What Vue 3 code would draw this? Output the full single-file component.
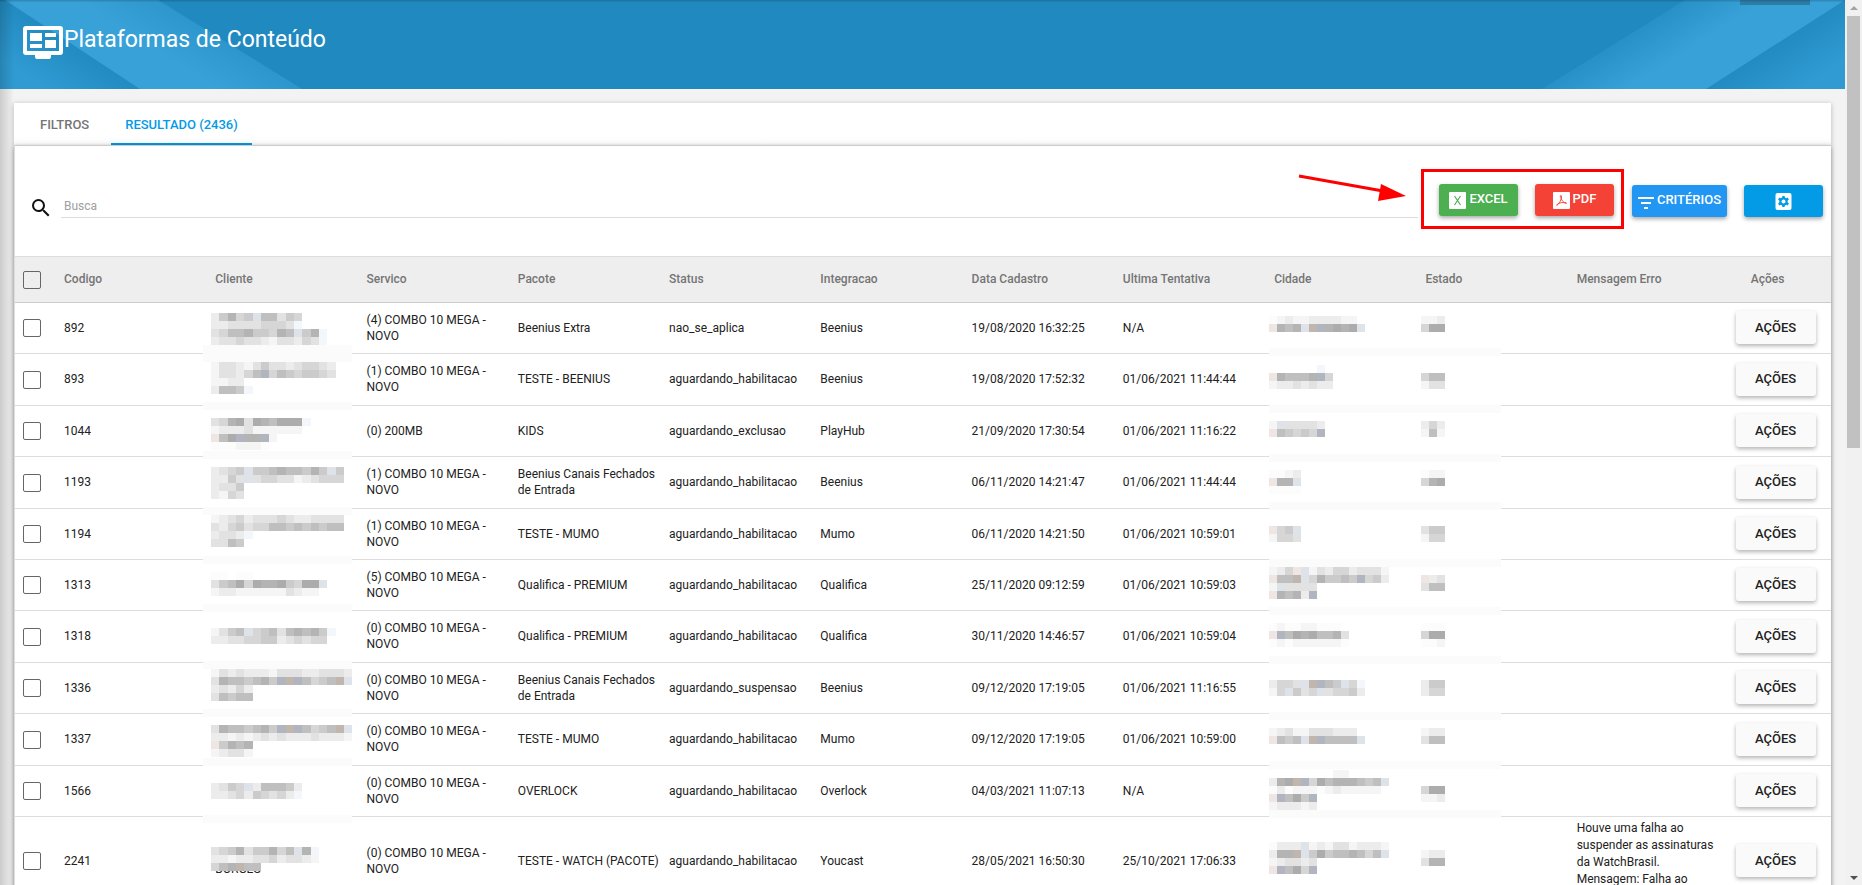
<script setup>
import { ref } from 'vue'

const search = ref('')

const columns = [
  'Codigo', 'Cliente', 'Servico', 'Pacote', 'Status', 'Integracao',
  'Data Cadastro', 'Ultima Tentativa', 'Cidade', 'Estado', 'Mensagem Erro',
]

const rows = [
  {
    code: '892', service: '(4) COMBO 10 MEGA - NOVO', pack: 'Beenius Extra', status: 'nao_se_aplica',
    integration: 'Beenius', created: '19/08/2020 16:32:25', last: 'N/A',
    client: { y: 10, band: 42, tall: 17, cells: ['25745b66354', '2233334443w', '3466755476b57w', '2334332133243w'] },
    place: { y: 13, band: 45, cells: ['01211222211|112', 'p767bov7878b|488'] },
  },
  {
    code: '893', service: '(1) COMBO 10 MEGA - NOVO', pack: 'TESTE - BEENIUS', status: 'aguardando_habilitacao',
    integration: 'Beenius', created: '19/08/2020 17:52:32', last: '01/06/2021 11:44:44',
    client: { y: 8, band: 48, cells: ['133213533234432', '133246v46545543', '1122', '2665w'] },
    place: { y: 11, band: 51, cells: ['......w', 'p76667v4|466', '12232322|133'] },
  },
  {
    code: '1044', service: '(0) 200MB', pack: 'KIDS', status: 'aguardando_exclusao',
    integration: 'PlayHub', created: '21/09/2020 17:30:54', last: '01/06/2021 11:16:22',
    client: { y: 12, band: 45, cells: ['34783876888w', '12223111111', 'p68v77v1', '0001110'] },
    place: { y: 15, band: 48, cells: ['1b33332|242', 'p65454v|161'] },
  },
  {
    code: '1193', service: '(1) COMBO 10 MEGA - NOVO', pack: 'Beenius Canais Fechados de Entrada', status: 'aguardando_habilitacao',
    integration: 'Beenius', created: '06/11/2020 14:21:47', last: '01/06/2021 11:44:44',
    client: { y: 10, band: 50, cells: ['2345b556766575b5', '2253b34433123444', '2335', '2143'] },
    place: { y: 13, band: 45, cells: ['0012|011', 'p77b|478', '0000'] },
  },
  {
    code: '1194', service: '(1) COMBO 10 MEGA - NOVO', pack: 'TESTE - MUMO', status: 'aguardando_habilitacao',
    integration: 'Mumo', created: '06/11/2020 14:21:50', last: '01/06/2021 10:59:01',
    client: { y: 6, band: 47, cells: ['1234233343223333', '3245344665656566', '2332w', '3365'] },
    place: { y: 17, band: 50, cells: ['p45b|355', '1443|144'] },
  },
  {
    code: '1313', service: '(5) COMBO 10 MEGA - NOVO', pack: 'Qualifica - PREMIUM', status: 'aguardando_habilitacao',
    integration: 'Qualifica', created: '25/11/2020 09:12:59', last: '01/06/2021 10:59:03',
    client: { y: 12, band: 44, cells: ['00.00', '3568487785488b', '1221111113211'] },
    place: { y: 7, band: 47, cells: ['124pb1324423331', 'p66ob475565v452|p23', '1b3333|366', 'p7672v'] },
  },
  {
    code: '1318', service: '(0) COMBO 10 MEGA - NOVO', pack: 'Qualifica - PREMIUM', status: 'aguardando_habilitacao',
    integration: 'Qualifica', created: '30/11/2020 14:46:57', last: '01/06/2021 10:59:04',
    client: { y: 17, band: 50, cells: ['1356b456367675w', '22334455234344'] },
    place: { y: 12, band: 45, cells: ['010011000|000', 'pv68786673|488', '0101111110|001'] },
  },
  {
    code: '1336', service: '(0) COMBO 10 MEGA - NOVO', pack: 'Beenius Canais Fechados de Entrada', status: 'aguardando_suspensao',
    integration: 'Beenius', created: '09/12/2020 17:19:05', last: '01/06/2021 11:16:55',
    client: { y: 6, band: 46, cells: ['13232221333223332', '37665675vov6456ob', '23242', '36566'] },
    place: { y: 17, band: 49, cells: ['2443bov65b4w|255', '14b534b34452|244'] },
  },
  {
    code: '1337', service: '(0) COMBO 10 MEGA - NOVO', pack: 'TESTE - MUMO', status: 'aguardando_habilitacao',
    integration: 'Mumo', created: '09/12/2020 17:19:05', last: '01/06/2021 10:59:00',
    client: { y: 11, band: 44, cells: ['37665675vov6456ob', '22121232322232221', 'p5767', '12331'] },
    place: { y: 14, band: 47, cells: ['12311333222|122', 'p656bov6666b|366'] },
  },
  {
    code: '1566', service: '(0) COMBO 10 MEGA - NOVO', pack: 'OVERLOCK', status: 'aguardando_habilitacao',
    integration: 'Overlock', created: '04/03/2021 11:07:13', last: 'N/A',
    client: { y: 17, band: 49, cells: ['2354b266652', '2234254342w'] },
    place: { y: 4, band: 44, cells: ['........11', '278ov486777656b', '02011101211111|488', 'pv685v|112', '122212'] },
  },
  {
    code: '2241', service: '(0) COMBO 10 MEGA - NOVO', pack: 'TESTE - WATCH\u00a0(PACOTE)', status: 'aguardando_habilitacao',
    integration: 'Youcast', created: '28/05/2021 16:50:30', last: '25/10/2021 17:06:33',
    clientName: 'BORGES', wide: true,
    error: 'Houve uma falha ao suspender as assinaturas da WatchBrasil. Mensagem: Falha ao',
    client: { y: 30, cells: ['3457355746b7w', '2212233423321', '467o66'] },
    place: { y: 25, cells: ['0222b1213312221', '277ob585667646b|122', '123323|377', 'pv684v'] },
  },
]

const shades = {
  0: '#fcfcfc', 1: '#f5f5f5', 2: '#ececec', 3: '#e2e2e2', 4: '#d6d6d6',
  5: '#cbcbcb', 6: '#bfbfbf', 7: '#b4b4b4', 8: '#acacac',
  p: '#efe5e3', b: '#dde3e9', o: '#c0b6ae', v: '#b0b5c0', w: '#f3f7fb',
}

// Turns the shade strings into coloured squares; text after "|" starts at the Estado column.
function tiles(mask, size) {
  const out = []
  mask.cells.forEach((line, r) => {
    line.split('|').forEach((part, p) => {
      ;[...part].forEach((ch, c) => {
        if (!shades[ch]) return
        const x0 = Math.round((c + p * 19) * size)
        const x1 = Math.round((c + 1 + p * 19) * size)
        out.push({ x: x0, y: mask.y + r * 8, w: x1 - x0, fill: shades[ch] })
      })
    })
  })
  return out
}

const view = rows.map((row) => ({
  ...row,
  clientTiles: tiles(row.client, 8.3),
  placeTiles: tiles(row.place, 8),
}))
</script>

<template>
  <div class="screen">
    <div class="page">
      <header class="banner">
        <svg class="banner-art left" width="320" height="89" viewBox="0 0 320 89" aria-hidden="true">
          <defs>
            <linearGradient id="la" gradientUnits="userSpaceOnUse" x1="72" y1="44" x2="44" y2="87">
              <stop offset="0" stop-color="#228bc1" /><stop offset="1" stop-color="#2f9bd2" />
            </linearGradient>
            <linearGradient id="lb" gradientUnits="userSpaceOnUse" x1="230" y1="44" x2="206" y2="82">
              <stop offset="0" stop-color="#2d97cd" /><stop offset="1" stop-color="#38a1d8" />
            </linearGradient>
          </defs>
          <path d="M0 0H158L302 89H0Z" fill="url(#lb)" />
          <path d="M0 0H5L140 89H0Z" fill="url(#la)" />
        </svg>
        <svg class="banner-art right" width="320" height="89" viewBox="0 0 320 89" aria-hidden="true">
          <defs>
            <linearGradient id="ra" gradientUnits="userSpaceOnUse" x1="88" y1="44" x2="112" y2="82">
              <stop offset="0" stop-color="#2791c7" /><stop offset="1" stop-color="#38a1d8" />
            </linearGradient>
            <linearGradient id="rb" gradientUnits="userSpaceOnUse" x1="250" y1="44" x2="278" y2="87">
              <stop offset="0" stop-color="#228bc1" /><stop offset="1" stop-color="#2f9bd2" />
            </linearGradient>
          </defs>
          <path d="M160 0H320V89H17Z" fill="url(#ra)" />
          <path d="M320 0V89H181Z" fill="url(#rb)" />
        </svg>
        <span class="notch"></span>
        <svg class="logo" width="40" height="34" viewBox="0 0 40 34" aria-hidden="true">
          <path fill="#fff" fill-rule="evenodd" d="M3 0H37Q40 0 40 3V26Q40 29 37 29H28V31Q28 33 26 33H14Q12 33 12 31V29H3Q0 29 0 26V3Q0 0 3 0ZM4 4V25H36V4Z" />
          <path fill="#fff" d="M7 7H19V15H7ZM22 7H33V11H22ZM7 18H19V22H7ZM22 14H33V22H22Z" />
        </svg>
        <h1>Plataformas de Conteúdo</h1>
      </header>

      <main class="content">
        <nav class="tabs">
          <button type="button" class="tab">FILTROS</button>
          <button type="button" class="tab active">RESULTADO (2436)</button>
        </nav>

        <section class="panel">
          <div class="toolbar">
            <label class="search-label" for="search" aria-label="Busca">
              <svg width="24" height="24" viewBox="0 0 24 24" aria-hidden="true">
                <path fill="#111" d="M15.5 14h-.79l-.28-.27A6.471 6.471 0 0 0 16 9.5 6.5 6.5 0 1 0 9.5 16c1.61 0 3.09-.59 4.23-1.57l.27.28v.79l5 4.99L20.49 19l-4.99-5zm-6 0C7.01 14 5 11.99 5 9.5S7.01 5 9.5 5 14 7.01 14 9.5 11.99 14 9.5 14z" />
              </svg>
            </label>
            <input id="search" v-model="search" class="search" type="text" placeholder="Busca" />
            <div class="exports">
              <button type="button" class="btn green">
                <svg width="17" height="17" viewBox="0 0 17 17" aria-hidden="true">
                  <rect width="17" height="17" rx="1" fill="#fff" />
                  <path d="M5.500 4L11.500 13M11.500 4L5.500 13" stroke="#4caf50" stroke-width="1.200" fill="none" />
                </svg>
                <span>EXCEL</span>
              </button>
              <button type="button" class="btn red">
                <svg width="17" height="17" viewBox="0 0 17 17" aria-hidden="true">
                  <rect width="17" height="17" rx="1" fill="#fff" />
                  <path d="M7.500 3.500Q9 3 8.500 6Q7.500 10 4 13.500Q3 13.500 4.500 12Q7.500 10 13 10.500Q14 12 12.500 11.500Q9 9.500 7.500 5.500Q7 4 7.500 3.500" stroke="#f44336" stroke-width="0.900" fill="none" />
                </svg>
                <span>PDF</span>
              </button>
              <svg class="arrow" width="110" height="32" viewBox="0 0 110 32" aria-hidden="true">
                <path d="M2 4L86 19" stroke="#f00" stroke-width="3" />
                <path d="M84 12L109 24L81 29Z" fill="#f00" />
              </svg>
            </div>
            <button type="button" class="btn blue">
              <svg width="16" height="14" viewBox="0 0 16 14" aria-hidden="true">
                <path fill="#fff" d="M0 2H16V4H0ZM3 7H13V9H3ZM6 12H10V14H6Z" />
              </svg>
              <span>CRITÉRIOS</span>
            </button>
            <button type="button" class="btn sky" aria-label="Configurações">
              <svg width="17" height="17" viewBox="0 0 16 17" aria-hidden="true">
                <rect width="16" height="17" rx="2" fill="#fff" />
                <path fill="#039be5" fill-rule="evenodd" d="M7 3H9L9.500 4.600L10.600 5.200L12.200 4.600L13.400 6.600L12.100 7.700V9.300L13.400 10.400L12.200 12.400L10.600 11.800L9.500 12.400L9 14H7L6.500 12.400L5.400 11.800L3.800 12.400L2.600 10.400L3.900 9.300V7.700L2.600 6.600L3.800 4.600L5.400 5.200L6.500 4.600ZM8 6.500A2 2 0 1 0 8 10.500A2 2 0 1 0 8 6.500Z" />
              </svg>
            </button>
          </div>

          <table>
            <colgroup>
              <col class="col-check" />
              <col v-for="c in columns" :key="c" />
              <col class="col-actions" />
            </colgroup>
            <thead>
              <tr>
                <th class="check"><input type="checkbox" aria-label="Selecionar todos" /></th>
                <th v-for="c in columns" :key="c" scope="col">{{ c }}</th>
                <th class="actions" scope="col">Ações</th>
              </tr>
            </thead>
            <tbody>
              <tr v-for="row in view" :key="row.code">
                <td class="check"><input type="checkbox" :aria-label="'Selecionar ' + row.code" /></td>
                <td>{{ row.code }}</td>
                <td class="masked">
                  <span v-if="row.clientName" class="client-name">{{ row.clientName }}</span>
                  <svg class="mosaic client" width="149" height="64" aria-hidden="true">
                    <rect v-if="row.client.band" :y="row.client.band" width="149" :height="row.client.tall || 8" fill="#fbfbfb" />
                    <g transform="translate(8 0)">
                      <rect v-if="row.clientName" y="30" width="141" height="24" fill="#fff" />
                      <rect v-for="(t, i) in row.clientTiles" :key="i" :x="t.x" :y="t.y" :width="t.w" height="8" :fill="t.fill" />
                    </g>
                  </svg>
                </td>
                <td>{{ row.service }}</td>
                <td :class="{ wide: row.wide }">{{ row.pack }}</td>
                <td>{{ row.status }}</td>
                <td>{{ row.integration }}</td>
                <td>{{ row.created }}</td>
                <td>{{ row.last }}</td>
                <td class="masked">
                  <svg class="mosaic place" width="232" height="64" aria-hidden="true">
                    <rect v-if="row.place.band" :y="row.place.band" width="232" height="8" fill="#fbfbfb" />
                    <rect v-for="(t, i) in row.placeTiles" :key="i" :x="t.x" :y="t.y" :width="t.w" height="8" :fill="t.fill" />
                  </svg>
                </td>
                <td></td>
                <td class="message">{{ row.error }}</td>
                <td class="actions"><button type="button" class="action">AÇÕES</button></td>
              </tr>
            </tbody>
          </table>
        </section>
      </main>
    </div>

    <div class="scrollbar" aria-hidden="true">
      <span class="up"></span>
      <span class="thumb"></span>
      <span class="down"></span>
    </div>
  </div>
</template>

<style>
body {
  overflow: hidden;
}
</style>

<style scoped>
.screen {
  display: flex;
  height: 100vh;
  overflow: hidden;
  background: #f1f1f1;
  color: #212121;
  font-family: Roboto, "Liberation Sans", sans-serif;
  font-size: 12px;
  line-height: 16px;
}
.screen *,
.screen *::before {
  box-sizing: border-box;
}
button,
input {
  margin: 0;
  font-family: inherit;
}
.page {
  position: relative;
  flex: 1;
  min-width: 0;
  background: #f3f3f3;
}
.page::before {
  content: "";
  position: absolute;
  inset: 0 auto 0 0;
  width: 14px;
  background: linear-gradient(90deg, rgba(0, 0, 0, 0.16), rgba(0, 0, 0, 0));
  z-index: 1;
}
.banner {
  position: relative;
  display: flex;
  align-items: flex-start;
  height: 89px;
  padding: 26px 23px;
  background: #2089bf;
}
.banner-art {
  position: absolute;
  top: 0;
}
.banner::after {
  content: "";
  position: absolute;
  inset: 0 0 auto;
  height: 2px;
  background: linear-gradient(rgba(0, 0, 0, 0.18), rgba(0, 0, 0, 0.04));
}
.left {
  left: 0;
}
.right {
  right: 0;
}
.notch {
  position: absolute;
  top: 0;
  right: 35px;
  width: 70px;
  height: 5px;
  background: #2b7ca7;
}
.logo {
  position: relative;
}
h1 {
  position: relative;
  margin: 0 0 0 1px;
  color: #fff;
  font-size: 23px;
  font-weight: 400;
  line-height: 28px;
}
.content {
  margin: 14px 14px 0;
}
.tabs {
  display: flex;
  gap: 8px;
  height: 42px;
  padding-left: 12px;
  background: linear-gradient(#fff 80%, #fafafa);
  box-shadow: 0 1px 5px rgba(0, 0, 0, 0.25);
}
.tab {
  padding: 3px 14px 0;
  border: 0;
  border-bottom: 2px solid transparent;
  background: none;
  color: #757575;
  font-size: 13px;
  font-weight: 500;
  line-height: 16px;
}
.tab.active {
  border-bottom-color: #039be5;
  color: #039be5;
}
.panel {
  position: relative;
  border-top: 1px solid #ccc;
  border-left: 1px solid #ddd;
  background: #fff;
  box-shadow: 0 2px 5px rgba(0, 0, 0, 0.5);
}
.toolbar {
  display: flex;
  align-items: flex-start;
  height: 110px;
  padding: 39px 8px 0 14px;
}
.search-label {
  height: 24px;
  margin-top: 11px;
}
.search {
  flex: 1;
  min-width: 0;
  height: 33px;
  margin-left: 8px;
  padding: 10px 3px 0;
  border: 0;
  border-bottom: 1px solid #ddd;
  background: none;
  font-size: 12px;
}
.search::placeholder {
  color: #9e9e9e;
}
.exports {
  position: relative;
  display: flex;
  gap: 17px;
  height: 60px;
  margin: -16px 8px 0 3px;
  padding: 12px 7px 12px 15px;
  border: 3px solid #f00;
}
.arrow {
  position: absolute;
  top: 0;
  right: 100%;
  margin-right: 17px;
}
.btn {
  display: flex;
  align-items: center;
  justify-content: center;
  gap: 3px;
  width: 79px;
  height: 32px;
  padding: 0;
  border: 0;
  border-radius: 3px;
  color: #fff;
  font-size: 13px;
  font-weight: 500;
  line-height: 16px;
  box-shadow: 0 2px 4px rgba(0, 0, 0, 0.35);
}
.btn span {
  padding-bottom: 2px;
}
.btn svg {
  margin-top: 1px;
}
.green {
  background: #4caf50;
}
.red {
  background: #f44336;
}
.blue {
  width: 95px;
  background: #2196f3;
}
.sky {
  margin-left: 17px;
  background: #039be5;
}
table {
  width: 100%;
  table-layout: fixed;
  border-collapse: separate;
  border-spacing: 0;
}
.col-check {
  width: 37px;
}
.col-actions {
  width: 115px;
}
th {
  height: 47px;
  padding: 0 0 2px 12px;
  border-top: 1px solid #ddd;
  border-bottom: 1px solid #ccc;
  background: #eee;
  color: #757575;
  font-size: 12px;
  font-weight: 500;
  text-align: left;
}
td {
  height: 51px;
  padding: 0 0 1px 12px;
  border-bottom: 1px solid #ddd;
}
tbody tr:nth-child(5n + 2) td,
tbody tr:nth-child(5n + 4) td {
  height: 52px;
}
tbody tr:last-child td {
  height: 89px;
}
.wide {
  white-space: nowrap;
}
.check {
  padding: 0 0 0 8px;
}
.check input {
  display: block;
  appearance: none;
  width: 18px;
  height: 18px;
  border: 1px solid #666;
  border-radius: 2px;
  background: transparent;
}
th.actions {
  padding: 0 12px 2px 0;
  text-align: center;
}
td.actions {
  padding: 0 0 1px 4px;
  text-align: center;
}
.action {
  width: 80px;
  height: 33px;
  padding: 0 0 1px;
  border: 0;
  border-radius: 3px;
  background: #fafafa;
  color: #212121;
  font-size: 13px;
  font-weight: 500;
  box-shadow: 0 2px 4px rgba(0, 0, 0, 0.3);
}
td.message {
  padding-top: 3px;
  vertical-align: top;
  line-height: 17px;
}
.masked {
  position: relative;
}
.client-name {
  display: block;
  padding-top: 16px;
}
.mosaic {
  position: absolute;
  top: 0;
  z-index: 1;
  overflow: visible;
  shape-rendering: crispEdges;
}
.client {
  left: 0;
}
.place {
  left: 7px;
}
.scrollbar {
  display: flex;
  flex-direction: column;
  align-items: center;
  width: 17px;
  padding: 6px 0 5px;
  background: #f1f1f1;
}
.up,
.down {
  border: 4px solid transparent;
}
.up {
  border-top: 0;
  border-bottom-color: #a3a3a3;
}
.down {
  margin-top: auto;
  border-bottom: 0;
  border-top-color: #505050;
}
.thumb {
  width: 13px;
  height: calc(50% - 5px);
  margin-top: 6px;
  background: #c1c1c1;
}
</style>
